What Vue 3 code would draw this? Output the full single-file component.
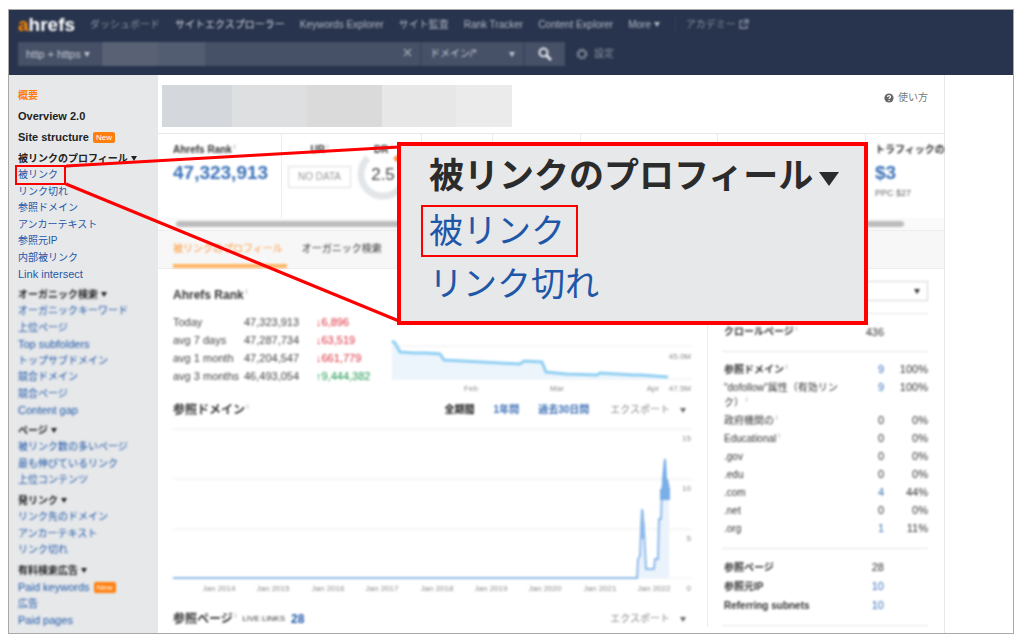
<script setup>
const topLinks = [
  { text: '概要', active: true },
  { text: 'Overview 2.0', latin: true },
  { text: 'Site structure', latin: true, badge: true },
]

const groups = [
  {
    title: '被リンクのプロフィール',
    links: [
      { text: '被リンク', marked: true },
      { text: 'リンク切れ' },
      { text: '参照ドメイン' },
      { text: 'アンカーテキスト' },
      { text: '参照元IP' },
      { text: '内部被リンク' },
      { text: 'Link intersect', latin: true },
    ],
  },
  {
    title: 'オーガニック検索',
    soft: true,
    links: [
      { text: 'オーガニックキーワード' },
      { text: '上位ページ' },
      { text: 'Top subfolders', latin: true },
      { text: 'トップサブドメイン' },
      { text: '競合ドメイン' },
      { text: '競合ページ' },
      { text: 'Content gap', latin: true },
    ],
  },
  {
    title: 'ページ',
    soft: true,
    links: [
      { text: '被リンク数の多いページ' },
      { text: '最も伸びているリンク' },
      { text: '上位コンテンツ' },
    ],
  },
  {
    title: '発リンク',
    soft: true,
    links: [
      { text: 'リンク先のドメイン' },
      { text: 'アンカーテキスト' },
      { text: 'リンク切れ' },
    ],
  },
  {
    title: '有料検索広告',
    soft: true,
    links: [
      { text: 'Paid keywords', latin: true, badge: true },
      { text: '広告' },
      { text: 'Paid pages', latin: true },
    ],
  },
]

const ranks = [
  ['Today', '47,323,913', '↓6,896', 'down'],
  ['avg 7 days', '47,287,734', '↓63,519', 'down'],
  ['avg 1 month', '47,204,547', '↓661,779', 'down'],
  ['avg 3 months', '46,493,054', '↑9,444,382', 'up'],
]

const domains = [
  { name: '参照ドメイン', info: true, bold: true, count: 9, share: '100%' },
  { name: '"dofollow"属性（有効リンク）', info: true, count: 9, share: '100%' },
  { name: '政府機関の', info: true, count: 0, share: '0%' },
  { name: 'Educational', info: true, count: 0, share: '0%' },
  { name: '.gov', count: 0, share: '0%' },
  { name: '.edu', count: 0, share: '0%' },
  { name: '.com', count: 4, share: '44%' },
  { name: '.net', count: 0, share: '0%' },
  { name: '.org', count: 1, share: '11%' },
]

const totals = [
  { name: '参照ページ', count: 28 },
  { name: '参照元IP', count: 10, link: true },
  { name: 'Referring subnets', count: 10, link: true },
]

const years = [2014, 2015, 2016, 2017, 2018, 2019, 2020, 2021, 2022].map((year, i) => ({
  label: `Jan ${year}`,
  x: 46 + Math.round(i * 54.4),
}))
</script>

<template>
  <div class="page">
    <div class="frame">
      <header class="header">
        <nav class="nav soft">
          <a class="logo" href="#"><span>a</span>hrefs</a>
          <a class="dim" href="#">ダッシュボード</a>
          <a class="current" href="#">サイトエクスプローラー</a>
          <a href="#">Keywords Explorer</a>
          <a href="#">サイト監査</a>
          <a href="#">Rank Tracker</a>
          <a href="#">Content Explorer</a>
          <a href="#">More <i class="caret"></i></a>
          <a class="dim academy" href="#">アカデミー
            <svg width="10" height="10" viewBox="0 0 10 10" fill="none" stroke="currentColor" stroke-width="1.3"><path d="M4 2H1v7h7V6M5 1h4v4M9 1 4.500 5.500" /></svg>
          </a>
        </nav>
        <form class="search soft" @submit.prevent>
          <button type="button" class="protocol">http + https <i class="caret"></i></button>
          <div class="target">
            <span class="mosaic"></span>
            <input type="text" aria-label="URL" />
            <button type="button" class="clear" aria-label="Clear">
              <svg width="9" height="9" viewBox="0 0 9 9" stroke="currentColor" stroke-width="1.3"><path d="M1 1l7 7M8 1 1 8" /></svg>
            </button>
          </div>
          <button type="button" class="mode"><span>ドメイン/*</span><i class="caret"></i></button>
          <button type="submit" class="go" aria-label="Search">
            <svg width="14" height="14" viewBox="0 0 14 14" fill="none" stroke="currentColor"><circle cx="5.500" cy="5.500" r="4" stroke-width="2" /><path d="M8.500 8.500 13 13" stroke-width="2.600" /></svg>
          </button>
          <a class="settings" href="#">
            <svg width="12" height="12" viewBox="0 0 12 12" fill="none" stroke="currentColor"><circle cx="6" cy="6" r="3.600" stroke-width="1.500" /><circle cx="6" cy="6" r="5" stroke-width="1.200" stroke-dasharray="2 1.930" /></svg>
            設定
          </a>
        </form>
      </header>

      <div class="body">
        <aside class="sidebar">
          <ul class="top">
            <li v-for="l in topLinks" :key="l.text">
              <a href="#" :class="{ latin: l.latin, active: l.active }">{{ l.text }}</a>
              <span v-if="l.badge" class="badge">New</span>
            </li>
          </ul>
          <section v-for="g in groups" :key="g.title" class="group" :class="{ soft: g.soft }">
            <h2>{{ g.title }} <i class="caret"></i></h2>
            <ul>
              <li v-for="l in g.links" :key="l.text">
                <a href="#" :class="{ latin: l.latin, marked: l.marked }">{{ l.text }}</a>
                <span v-if="l.badge" class="badge">New</span>
              </li>
            </ul>
          </section>
        </aside>

        <main class="main">
          <div class="site">
            <div class="masked"><span></span><span></span><span></span><span></span><span></span></div>
            <a class="help" href="#">
              <svg width="10" height="10" viewBox="0 0 10 10"><circle cx="5" cy="5" r="4.600" fill="#666" /><path d="M3.500 3.900C3.500 2.200 6.500 2.200 6.500 3.900 6.500 4.900 5 4.900 5 6M5 6.900v1.100" fill="none" stroke="#fff" stroke-width="1.200" /></svg>
              使い方
            </a>
          </div>

          <div class="metrics">
            <div class="metric rank"><div class="soft"><h3>Ahrefs Rank<sup>i</sup></h3><a class="value" href="#">47,323,913</a></div></div>
            <div class="metric ratings">
              <div class="soft ur"><h3>UR<sup>i</sup></h3><span class="nodata">NO DATA</span></div>
              <div class="soft dr">
                <h3>DR<sup>i</sup></h3>
                <svg class="gauge" width="52" height="52" viewBox="0 0 52 52">
                  <path d="M11 9A22 22 0 1 0 41 9" fill="none" stroke="#e3e6e9" stroke-width="7" />
                  <path d="M39 7l3 4" stroke="#f98a34" stroke-width="7" />
                  <text x="26" y="31" text-anchor="middle">2.5</text>
                </svg>
              </div>
            </div>
            <div class="metric m3"></div>
            <div class="metric m4"></div>
            <div class="metric m5"></div>
            <div class="metric m6"></div>
            <div class="metric traffic"><div class="soft"><h3>トラフィックの</h3><a class="value" href="#">$3</a><p>PPC $27</p></div></div>
          </div>
          <div class="scroll"><span class="soft"></span></div>

          <nav class="tabs">
            <a class="soft selected" href="#">被リンクのプロフィール</a>
            <a class="soft" href="#">オーガニック検索</a>
          </nav>

          <div class="content">
            <div class="charts soft">
              <div class="overview">
                <section>
                  <h2>Ahrefs Rank<sup>i</sup></h2>
                  <table class="ranks">
                    <tbody>
                      <tr v-for="r in ranks" :key="r[0]"><th scope="row">{{ r[0] }}</th><td>{{ r[1] }}</td><td :class="r[3]">{{ r[2] }}</td></tr>
                    </tbody>
                  </table>
                </section>
                <svg class="trend" viewBox="0 0 301 60" role="img" aria-label="Ahrefs Rank">
                  <path class="grid" d="M0 12H301M0 45H301" />
                  <path d="M1 7 4 9 9 17 23 19 49 20 53 26 129 30 133 27 151 28 155 38 206 41 209 39 242 41 277 43V45H1Z" fill="#ecf5fc" />
                  <path d="M1 7 4 9 9 18 23 19 35 19 49 20 53 26 90 28 129 30 133 27 151 28 155 38 175 40 206 41 209 39 242 41 250 41 277 43" fill="none" stroke="#90cff2" stroke-width="3" />
                  <text x="300" y="25" text-anchor="end">45.0M</text>
                  <text x="80" y="57" text-anchor="middle">Feb</text>
                  <text x="166" y="57" text-anchor="middle">Mar</text>
                  <text x="262" y="57" text-anchor="middle">Apr</text>
                  <text x="300" y="57" text-anchor="end">47.5M</text>
                </svg>
              </div>

              <div class="bar">
                <h2>参照ドメイン<sup>i</sup></h2>
                <div class="periods"><b>全期間</b><a href="#">1年間</a><a href="#">過去30日間</a></div>
                <button type="button" class="export">エクスポート <i class="caret"></i></button>
              </div>
              <svg class="history" viewBox="0 0 519 176" role="img" aria-label="参照ドメイン">
                <path class="grid" d="M0 11H519M0 61H519M0 111H519M0 160H519" />
                <path d="M464 160 467 138 469 91 472 120 473 151H481L482 141H486L487 101H489V71L492 61V42L496 81V160Z" fill="#eaf2fc" />
                <path d="M0 160H464L465 141 467 138 468 111 469 91 471 111 473 151H481L482 141H485L486 101H488L489 71 491 61" fill="none" stroke="#8fbbea" stroke-width="2" />
                <path d="M467 111 469 91H470L472 111V121H468Z" fill="#8fbbea" />
                <path d="M487 82V71H489V61L491 41H493L494 61H495L497 71V82Z" fill="#79aee6" />
                <text x="518" y="23" text-anchor="end">15</text>
                <text x="518" y="73" text-anchor="end">10</text>
                <text x="518" y="123" text-anchor="end">5</text>
                <text x="518" y="173" text-anchor="end">0</text>
                <text v-for="y in years" :key="y.label" :x="y.x" y="173" text-anchor="middle">{{ y.label }}</text>
              </svg>

              <div class="bar pages">
                <h2>参照ページ<sup>i</sup></h2>
                <small>LIVE LINKS</small><a class="total" href="#">28</a>
                <button type="button" class="export">エクスポート <i class="caret"></i></button>
              </div>
            </div>

            <aside class="stats">
              <div class="soft">
                <button type="button" class="picker" aria-label="Index"><i class="caret"></i></button>
                <table>
                  <tbody class="crawl">
                    <tr><th scope="row">クロールページ<sup>i</sup></th><td>436</td><td></td></tr>
                  </tbody>
                </table>
                <table class="domains">
                  <tbody>
                    <tr v-for="d in domains" :key="d.name">
                      <th scope="row" :class="{ plain: !d.bold }">{{ d.name }}<sup v-if="d.info">i</sup></th>
                      <td><a v-if="d.count" href="#">{{ d.count }}</a><template v-else>0</template></td>
                      <td>{{ d.share }}</td>
                    </tr>
                  </tbody>
                </table>
                <table class="totals">
                  <tbody>
                    <tr v-for="t in totals" :key="t.name">
                      <th scope="row">{{ t.name }}</th>
                      <td><a v-if="t.link" href="#">{{ t.count }}</a><template v-else>{{ t.count }}</template></td>
                      <td></td>
                    </tr>
                  </tbody>
                </table>
              </div>
            </aside>
          </div>
        </main>
      </div>

      <svg class="leaders" aria-hidden="true"><path d="M57 156 390 137M57 174 390 311" stroke="#f00" stroke-width="3" /></svg>
      <div class="callout">
        <h2>被リンクのプロフィール<i class="caret"></i></h2>
        <a class="boxed" href="#">被リンク</a>
        <a href="#">リンク切れ</a>
      </div>
    </div>
  </div>
</template>

<style>
body {
  background: #fff;
}
</style>

<style scoped>
* {
  box-sizing: border-box;
}
.page {
  padding: 9px 10px 10px 8px;
  font: 10px/16px "Liberation Sans", "Noto Sans CJK JP", sans-serif;
  color: #333;
}
.frame {
  position: relative;
  display: flex;
  flex-direction: column;
  min-height: calc(100vh - 19px);
  border: 1px solid #a9a9a9;
}
.soft {
  filter: blur(1px);
}
a {
  color: #1f57a8;
  text-decoration: none;
}
ul {
  margin: 0;
  padding: 0;
  list-style: none;
}
h2,
h3,
p {
  margin: 0;
}
button {
  border: 0;
  padding: 0;
  font: inherit;
  color: inherit;
  background: none;
}
sup {
  margin-left: 2px;
  font-size: 7px;
  font-weight: 400;
  line-height: 0;
  color: #999;
}
.caret {
  display: inline-block;
  border: 3px solid transparent;
  border-top: 5px solid currentColor;
  border-bottom: 0;
  vertical-align: 1px;
}

/* header */
.header {
  padding: 5px 9px 9px;
  background: #28344d;
}
.nav {
  display: flex;
  align-items: center;
  gap: 15px;
  height: 20px;
  margin-bottom: 7px;
  white-space: nowrap;
}
.nav a {
  color: #b4bac6;
}
.nav .logo {
  font-size: 19px;
  font-weight: 700;
  color: #fff;
}
.logo span {
  color: #ff8a00;
}
.nav .dim {
  color: #8b93a3;
}
.nav .current {
  color: #d5d9e0;
}
.nav .academy {
  padding-left: 10px;
  border-left: 1px solid #364159;
}
.academy svg {
  vertical-align: -1px;
}
.search {
  display: flex;
  height: 24px;
  color: #c3c8d2;
}
.search > button,
.target {
  background: #465167;
}
.search > .protocol {
  width: 83px;
  padding-left: 8px;
  font-size: 11px;
  text-align: left;
}
.target {
  display: flex;
  align-items: center;
  width: 319px;
  border-left: 1px solid #3c475e;
}
.mosaic {
  width: 103px;
  height: 24px;
  background: linear-gradient(90deg, #596174 54%, #535d71 54%);
}
.target input {
  flex: 1;
  min-width: 0;
  height: 22px;
  border: 0;
  background: none;
  color: inherit;
}
.clear {
  width: 26px;
  color: #a3abb8;
}
.mode {
  display: flex;
  align-items: center;
  justify-content: space-between;
  width: 103px;
}
.search > .mode {
  padding: 0 8px;
}
.search > .mode,
.search > .go {
  border-left: 2px solid #3c475e;
}
.go {
  width: 42px;
  color: #e4e7ec;
}
.go svg {
  vertical-align: middle;
}
.settings {
  display: flex;
  align-items: center;
  gap: 6px;
  margin-left: 11px;
  color: #8b93a3;
}

/* layout */
.body {
  flex: 1;
  display: grid;
  grid-template-columns: 149px minmax(0, 1fr);
  padding-right: 68px;
}
.main {
  border-right: 1px solid #e9e9e9;
}

/* sidebar */
.sidebar {
  padding: 10px 0 0 9px;
  background: #e6e8ea;
  white-space: nowrap;
}
.top {
  margin-bottom: 3px;
}
.top li {
  height: 21px;
  line-height: 21px;
}
.top a {
  font-weight: 700;
  color: #222;
}
.top .active {
  color: #ff7f0e;
}
.latin {
  font-size: 11px;
}
.badge {
  display: inline-block;
  margin-left: 4px;
  padding: 0 3px;
  border-radius: 2px;
  background: #ff7f0e;
  color: #fff;
  font-size: 8px;
  line-height: 11px;
  vertical-align: 1px;
}
.group {
  margin-bottom: 4px;
}
.group:last-child {
  margin-bottom: 0;
}
.group h2 {
  height: 16px;
  font-size: 10px;
  color: #222;
}
.group li {
  height: 16px;
}
.group li:nth-child(odd) {
  height: 17px;
}
.marked {
  position: relative;
  display: inline-block;
}
.marked::after {
  content: "";
  position: absolute;
  inset: -2px -8px -2px -3px;
  border: 2px solid #f00;
}

/* site row */
.site {
  display: flex;
  justify-content: space-between;
  height: 59px;
  padding: 10px 16px 0 4px;
  border-bottom: 1px solid #e9e9e9;
}
.masked {
  display: grid;
  grid-template-columns: 70px 75px 75px 74px 56px;
  height: 42px;
}
.masked span:nth-child(1) { background: #d4d8dd; }
.masked span:nth-child(2) { background: #dddfe1; }
.masked span:nth-child(3) { background: #dadada; }
.masked span:nth-child(4) { background: #e7e7e7; }
.masked span:nth-child(5) { background: #ebebeb; }
.help {
  display: flex;
  align-items: center;
  gap: 4px;
  height: 26px;
  color: #777;
}

/* metrics */
.metrics {
  display: flex;
  height: 84px;
}
.metric {
  flex: none;
  padding-top: 8px;
  border-right: 1px solid #ededed;
  white-space: nowrap;
}
.metric h3 {
  font-size: 10px;
  line-height: 16px;
}
.rank { width: 124px; padding-left: 15px; }
.ratings { display: flex; width: 140px; }
.m3 { width: 71px; }
.m4 { width: 88px; }
.m5 { width: 137px; }
.m6 { width: 148px; }
.traffic { flex: 1; min-width: 0; padding-left: 9px; border: 0; }
.value {
  display: block;
  font-size: 19px;
  font-weight: 700;
  line-height: 30px;
  color: #3b72b8;
}
.traffic p {
  font-size: 9px;
  line-height: 10px;
  color: #666;
}
.ur {
  width: 63px;
  margin-left: 6px;
  text-align: center;
}
.nodata {
  display: block;
  margin-top: 8px;
  border: 1px solid #ddd;
  line-height: 20px;
  color: #999;
}
.dr {
  width: 52px;
  margin-left: 6px;
  text-align: center;
}
.gauge {
  display: block;
  margin-top: -9px;
}
.gauge text {
  font-size: 17px;
  fill: #444;
}
.scroll {
  height: 12px;
  padding: 3px 40px 0 18px;
  background: #fafafa;
}
.scroll span {
  display: block;
  height: 6px;
  border-radius: 3px;
  background: #bdbdbd;
}
.tabs {
  display: flex;
  gap: 15px;
  height: 39px;
  padding-left: 15px;
  border-top: 1px solid #ededed;
  border-bottom: 1px solid #ededed;
  background: #f7f7f7;
}
.tabs a {
  padding: 10px 4px 0 0;
  color: #333;
}
.tabs .selected {
  border-bottom: 4px solid #ffb566;
  color: #ff9a3c;
}

/* charts */
.content {
  display: grid;
  grid-template-columns: minmax(0, 1fr) 237px;
}
.charts {
  padding: 18px 15px 0;
}
.charts h2 {
  font-size: 12px;
  line-height: 16px;
}
.overview {
  display: grid;
  grid-template-columns: 218px minmax(0, 1fr);
}
table {
  width: 100%;
  border-collapse: collapse;
}
th,
td {
  padding: 0;
  font-weight: 400;
  text-align: left;
}
.ranks {
  table-layout: fixed;
  margin-top: 10px;
  font-size: 11px;
  line-height: 18px;
  color: #444;
  white-space: nowrap;
}
.ranks th { width: 71px; }
.ranks td { width: 72px; }
.ranks td:last-child { width: auto; }
.ranks .down { color: #dc2b3a; }
.ranks .up { color: #1c9850; }
.trend {
  display: block;
  width: 100%;
  margin-top: 47px;
}
.grid {
  fill: none;
  stroke: #ececec;
}
.trend text,
.history text {
  font-size: 8px;
  fill: #888;
}
.bar {
  display: flex;
  align-items: center;
  margin-top: 8px;
  padding-right: 6px;
}
.periods {
  display: flex;
  gap: 19px;
  margin-left: auto;
  font-weight: 700;
}
.periods a {
  color: #3b6eb5;
}
.export {
  display: flex;
  align-items: center;
  gap: 10px;
  margin-left: 21px;
  color: #888;
}
.export .caret {
  color: #666;
}
.history {
  display: block;
  width: 100%;
}
.pages {
  margin-top: 17px;
}
.pages small {
  margin: 0 6px;
  font-size: 8px;
}
.total {
  font-size: 12px;
  font-weight: 700;
}
.pages .export {
  margin-left: auto;
}

/* stats */
.stats {
  padding: 12px 16px 0 14px;
  border-left: 1px solid #ededed;
}
.stats a {
  color: #3b72b8;
}
.picker {
  display: flex;
  align-items: center;
  justify-content: flex-end;
  width: 100%;
  height: 20px;
  margin-bottom: 12px;
  padding-right: 7px;
  border: 1px solid #d4d4d4;
}
.stats table {
  display: block;
  border-top: 1px solid #e4e4e4;
}
.stats tbody {
  display: block;
}
.stats tr {
  display: grid;
  grid-template-columns: minmax(0, 1fr) 40px 44px;
  line-height: 18px;
}
.stats th {
  padding-left: 2px;
  font-weight: 700;
}
.stats .plain {
  font-weight: 400;
}
.stats td {
  font-size: 11px;
  text-align: right;
}
.crawl {
  padding: 9px 0 10px;
}
.domains {
  padding: 8px 0 11px;
}
.domains tr {
  padding: 2px 0 1px;
  line-height: 15px;
}
.stats .totals {
  padding: 9px 0 10px;
  border-bottom: 1px solid #e4e4e4;
}
.totals tr {
  line-height: 19px;
}

/* enlarged callout */
.leaders {
  position: absolute;
  top: 0;
  left: 0;
  width: 100%;
  height: 100%;
  pointer-events: none;
}
.callout {
  position: absolute;
  top: 132px;
  left: 388px;
  width: 471px;
  padding: 6px 0 13px 28px;
  border: 4px solid #f00;
  background: #e6e8ea;
  font-size: 34px;
  line-height: 48px;
  white-space: nowrap;
}
.callout h2 {
  font-size: 35px;
  font-weight: 700;
  color: #2b2b2b;
}
.callout .caret {
  margin-left: 6px;
  border-width: 14px 10px 0;
  vertical-align: 2px;
}
.callout a {
  display: block;
}
.callout .boxed {
  width: 157px;
  margin: 5px 0 3px -8px;
  padding-left: 6px;
  border: 2px solid #f00;
}
</style>
